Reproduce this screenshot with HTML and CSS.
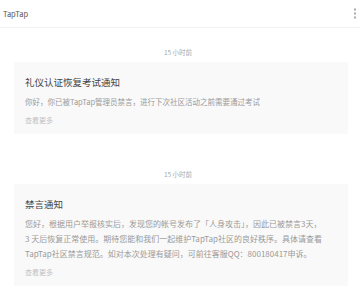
FILE: index.html
```html
<!DOCTYPE html>
<html lang="zh-CN">
<head>
    <meta charset="UTF-8">
    <meta name="viewport" content="width=device-width, initial-scale=1.0">
    <title>TapTap</title>
    <link rel="stylesheet" href="styles.css">
</head>
<body>
    <div class="header">
        <span class="header-title">TapTap</span>
        <span class="more-icon">
            <svg width="4" height="11" viewBox="0 0 4 11">
                <rect x="1" y="0.5" width="2" height="2" fill="#aaa"/>
                <rect x="1" y="4.5" width="2" height="2" fill="#aaa"/>
                <rect x="1" y="8.5" width="2" height="2" fill="#aaa"/>
            </svg>
        </span>
    </div>

    <div class="notice">
        <div class="time">15 小时前</div>
        <div class="card">
            <div class="card-title">礼仪认证恢复考试通知</div>
            <div class="card-body card-body-short">你好，你已被TapTap管理员禁言，进行下次社区活动之前需要通过考试</div>
            <div class="card-more">查看更多</div>
        </div>
    </div>

    <div class="notice notice-second">
        <div class="time">15 小时前</div>
        <div class="card">
            <div class="card-title">禁言通知</div>
            <div class="card-body">您好，根据用户举报核实后，发现您的帐号发布了「人身攻击」，因此已被禁言3天，<br>3 天后恢复正常使用。期待您能和我们一起维护TapTap社区的良好秩序。具体请查看<br>TapTap社区禁言规范。如对本次处理有疑问，可前往客服QQ：800180417申诉。</div>
            <div class="card-more">查看更多</div>
        </div>
    </div>
</body>
</html>
```

FILE: styles.css
```css
body {
    margin: 0;
    font-family: "Noto Sans CJK SC", "Noto Sans", sans-serif;
    background-color: #fff;
    color: #333;
    overflow: hidden;
}

.header {
    height: 27px;
    display: flex;
    justify-content: space-between;
    align-items: center;
    padding: 0 3px;
    border-bottom: 1px solid #f2f2f2;
}

.header-title {
    font-size: 7.5px;
    color: #555;
}

.more-icon {
    display: flex;
    margin-right: 0;
}

.notice {
    margin-top: 19px;
}

.notice-second {
    margin-top: 35px;
}

.time {
    text-align: center;
    font-size: 6.5px;
    line-height: 10px;
    color: #aaa;
    margin-bottom: 5px;
    padding-right: 4px;
}

.card {
    margin: 0 12px 0 14px;
    padding: 13px 11px 8px;
    background-color: #f9f9f9;
}

.card-title {
    font-size: 9.5px;
    line-height: 14px;
    color: #444;
}

.card-body {
    margin-top: 5px;
    font-size: 8px;
    line-height: 15px;
    color: #999;
    white-space: nowrap;
}

.card-body-short {
    font-size: 7.5px;
}

.card-more {
    margin-top: 5px;
    font-size: 7px;
    line-height: 12px;
    color: #c2c2c2;
}
```
